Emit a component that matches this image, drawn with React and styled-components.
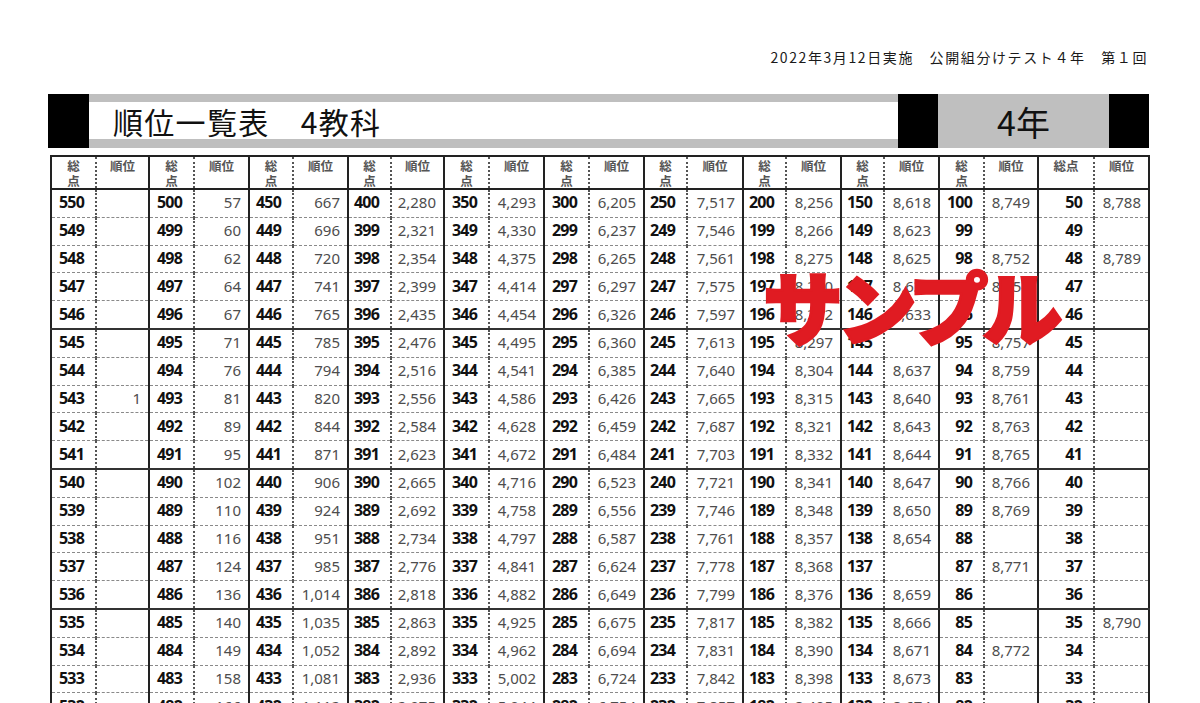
import styled, { createGlobalStyle } from "styled-components";

const GlobalStyle = createGlobalStyle`
  html, body {
    margin: 0;
    padding: 0;
    background: #ffffff;
    overflow: hidden;
  }
  body {
    font-family: "Noto Sans CJK JP", "Noto Sans", sans-serif;
    color: #111;
  }
`;

const Page = styled.div`
  position: relative;
  width: 1200px;
  height: 703px;
  padding: 47px 51px 0 48px;
  box-sizing: border-box;
`;

const ExamLine = styled.div`
  height: 20px;
  line-height: 20px;
  text-align: right;
  font-size: 14px;
  letter-spacing: 1.6px;
  padding-right: 1px;
  color: #1a1a1a;
`;

const TitleBar = styled.div`
  display: flex;
  height: 54px;
  margin-top: 27px;
`;

const BlackBlock = styled.div`
  width: ${(p) => p.$w}px;
  background: #000;
  flex: none;
`;

const TitleBox = styled.div`
  flex: 1;
  display: flex;
  align-items: center;
  border-top: 8px solid #bfbfbf;
  border-bottom: 9px solid #bfbfbf;
  padding-left: 24px;
  font-size: 30px;
  letter-spacing: 1.3px;
  color: #111;
`;

const GradeBox = styled.div`
  width: 171px;
  flex: none;
  background: #bfbfbf;
  display: flex;
  align-items: center;
  justify-content: center;
  font-size: 34px;
  color: #111;
`;

const Table = styled.table`
  border-collapse: collapse;
  table-layout: fixed;
  width: 1098px;
  margin: 7px 0 0 2px;
  border: 2px solid #222;
`;

const Col = styled.col`
  width: ${(p) => p.$w}px;
`;

const HeadScore = styled.th`
  height: 28px;
  padding: 1px 0 0;
  vertical-align: top;
  text-align: center;
  font-size: 12.5px;
  line-height: 15px;
  font-weight: bold;
  color: #555;
  border-left: 2px solid #222;
  border-bottom: 2px solid #222;
`;

const HeadRank = styled.th`
  padding: 1px 0 0;
  vertical-align: top;
  text-align: center;
  font-size: 12.5px;
  line-height: 15px;
  font-weight: bold;
  color: #555;
  border-left: 2px dotted #555;
  border-bottom: 2px solid #222;
`;

const ScoreCell = styled.td`
  height: 24.8px;
  padding: 0 11px 2px 0;
  text-align: right;
  font-family: "Noto Sans", "Noto Sans CJK JP", sans-serif;
  font-weight: bold;
  font-size: 16px;
  letter-spacing: -0.8px;
  color: #111;
  border-left: 2px solid #222;
  border-bottom: ${(p) => (p.$block ? "2px solid #333" : "1px dashed #8a8a8a")};
`;

const RankCell = styled.td`
  padding: 0 7px 2px 0;
  text-align: right;
  font-family: "Noto Sans", "Noto Sans CJK JP", sans-serif;
  font-size: 15px;
  color: #4d4d4d;
  white-space: nowrap;
  border-left: 2px dotted #555;
  border-bottom: ${(p) => (p.$block ? "2px solid #333" : "1px dashed #8a8a8a")};
`;

const Stamp = styled.div`
  position: absolute;
  left: 763px;
  top: 264px;
  font-size: 80px;
  line-height: 1;
  font-weight: 900;
  letter-spacing: -6px;
  color: #e01b22;
  -webkit-text-stroke: 2.5px #e01b22;
  pointer-events: none;
`;

const groupWidths = [98, 100, 99, 96, 100, 100, 99, 98, 98, 99, 111];
const scoreWidths = [45, 45, 44, 43, 45, 45, 43, 43, 43, 45, 56];
const starts = [550, 500, 450, 400, 350, 300, 250, 200, 150, 100, 50];

const ranks = [
  ["", "", "", "", "", "", "", "1", "", "", "", "", "", "", "", "", "", "", "", ""],
  ["57", "60", "62", "64", "67", "71", "76", "81", "89", "95", "102", "110", "116", "124", "136", "140", "149", "158", "166", "171"],
  ["667", "696", "720", "741", "765", "785", "794", "820", "844", "871", "906", "924", "951", "985", "1,014", "1,035", "1,052", "1,081", "1,112", "1,139"],
  ["2,280", "2,321", "2,354", "2,399", "2,435", "2,476", "2,516", "2,556", "2,584", "2,623", "2,665", "2,692", "2,734", "2,776", "2,818", "2,863", "2,892", "2,936", "2,975", "3,021"],
  ["4,293", "4,330", "4,375", "4,414", "4,454", "4,495", "4,541", "4,586", "4,628", "4,672", "4,716", "4,758", "4,797", "4,841", "4,882", "4,925", "4,962", "5,002", "5,044", "5,087"],
  ["6,205", "6,237", "6,265", "6,297", "6,326", "6,360", "6,385", "6,426", "6,459", "6,484", "6,523", "6,556", "6,587", "6,624", "6,649", "6,675", "6,694", "6,724", "6,754", "6,778"],
  ["7,517", "7,546", "7,561", "7,575", "7,597", "7,613", "7,640", "7,665", "7,687", "7,703", "7,721", "7,746", "7,761", "7,778", "7,799", "7,817", "7,831", "7,842", "7,857", "7,873"],
  ["8,256", "8,266", "8,275", "8,280", "8,292", "8,297", "8,304", "8,315", "8,321", "8,332", "8,341", "8,348", "8,357", "8,368", "8,376", "8,382", "8,390", "8,398", "8,405", "8,411"],
  ["8,618", "8,623", "8,625", "8,630", "8,633", "", "8,637", "8,640", "8,643", "8,644", "8,647", "8,650", "8,654", "", "8,659", "8,666", "8,671", "8,673", "8,674", "8,676"],
  ["8,749", "", "8,752", "8,754", "", "8,757", "8,759", "8,761", "8,763", "8,765", "8,766", "8,769", "", "8,771", "", "", "8,772", "", "", ""],
  ["8,788", "", "8,789", "", "", "", "", "", "", "", "", "", "", "", "", "8,790", "", "", "", ""],
];

const ROWS = 19;

export default function App() {
  return (
    <>
      <GlobalStyle />
      <Page>
        <ExamLine>2022年3月12日実施　公開組分けテスト４年　第１回</ExamLine>
        <TitleBar>
          <BlackBlock $w={41} />
          <TitleBox>順位一覧表　4教科</TitleBox>
          <BlackBlock $w={40} />
          <GradeBox>4年</GradeBox>
          <BlackBlock $w={40} />
        </TitleBar>
        <Table>
          <colgroup>
            {groupWidths.map((w, g) => [
              <Col key={`s${g}`} $w={scoreWidths[g]} />,
              <Col key={`r${g}`} $w={w - scoreWidths[g]} />,
            ])}
          </colgroup>
          <thead>
            <tr>
              {starts.map((s, g) => [
                <HeadScore key={`hs${g}`}>
                  {g === starts.length - 1 ? "総点" : <>総<br />点</>}
                </HeadScore>,
                <HeadRank key={`hr${g}`}>順位</HeadRank>,
              ])}
            </tr>
          </thead>
          <tbody>
            {Array.from({ length: ROWS }, (_, i) => {
              const block = i % 5 === 4;
              return (
                <tr key={i}>
                  {starts.map((s, g) => [
                    <ScoreCell key={`s${g}`} $block={block}>{s - i}</ScoreCell>,
                    <RankCell key={`r${g}`} $block={block}>{ranks[g][i]}</RankCell>,
                  ])}
                </tr>
              );
            })}
          </tbody>
        </Table>
        <Stamp>サンプル</Stamp>
      </Page>
    </>
  );
}
